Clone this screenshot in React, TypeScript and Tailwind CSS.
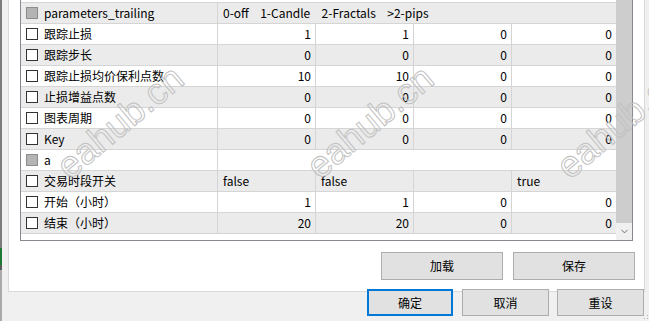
import { ChevronDown } from 'lucide-react';

type Row = {
  name: string;
  group?: boolean;
  note?: string;
  vals?: string[];
  left?: boolean;
};

const rows: Row[] = [
  { name: 'parameters_trailing', group: true, note: '0-off  1-Candle  2-Fractals  >2-pips' },
  { name: '跟踪止损', vals: ['1', '1', '0', '0'] },
  { name: '跟踪步长', vals: ['0', '0', '0', '0'] },
  { name: '跟踪止损均价保利点数', vals: ['10', '10', '0', '0'] },
  { name: '止损增益点数', vals: ['0', '0', '0', '0'] },
  { name: '图表周期', vals: ['0', '0', '0', '0'] },
  { name: 'Key', vals: ['0', '0', '0', '0'] },
  { name: 'a', group: true, note: '' },
  { name: '交易时段开关', vals: ['false', 'false', '', 'true'], left: true },
  { name: '开始（小时）', vals: ['1', '1', '0', '0'] },
  { name: '结束（小时）', vals: ['20', '20', '0', '0'] },
];

const Check = ({ group }: { group?: boolean }) => (
  <span
    className={
      group
        ? 'w-[12px] h-[12px] border border-[#8c8c8c] bg-[#b4b4b4] shrink-0'
        : 'w-[12px] h-[12px] border border-[#333333] bg-white shrink-0'
    }
  />
);

const Watermark = ({ x }: { x: number }) => (
  <span
    className="absolute top-[122px] pointer-events-none whitespace-nowrap font-['Liberation_Sans',sans-serif] text-[37px] leading-none text-transparent [-webkit-text-stroke:1px_#c2c2c2] -translate-x-1/2 -translate-y-1/2 -rotate-[40deg]"
    style={{ left: x }}
  >
    eahub.cn
  </span>
);

const Button = ({ label, primary, w }: { label: string; primary?: boolean; w: string }) => (
  <button
    className={`${w} ${
      primary ? 'border-2 border-[#0078d7]' : 'border border-[#adadad]'
    } bg-[#e1e1e1] text-[12px] text-black flex items-center justify-center`}
  >
    {label}
  </button>
);

export default function App() {
  return (
    <div className="relative w-[649px] h-[321px] overflow-hidden bg-[#f0f0f0] font-['Noto_Sans_CJK_SC',sans-serif] text-[12px] text-black flex">
      {/* left edge of the window behind */}
      <div className="w-[2px] flex flex-col">
        <div className="h-[248px] bg-[#7b7b7b]" />
        <div className="h-[17px] bg-[#1f7a36]" />
        <div className="h-[5px] bg-[#5a5a5a]" />
        <div className="flex-1 bg-[#a9a9a9]" />
      </div>

      <div className="ml-[6px] flex flex-col">
        {/* white tab panel */}
        <div className="w-[637px] bg-white border-x border-b border-[#d9d9d9] pl-[11px] pr-[9px] pb-[11px]">
          {/* parameter table */}
          <div className="w-[613px] h-[241px] border-x border-b border-[#888890] flex">
            <div className="w-[595px] flex flex-col">
              <div className="h-[3px] bg-white border-b border-[#d5d5d5]" />
              {rows.map((r, i) => (
                <div
                  key={r.name}
                  className={`grid grid-cols-[197px_98px_98px_98px_104px] h-[21px] border-b border-[#d5d5d5] leading-[20px] ${
                    i % 2 === 0 ? 'bg-[#ebebeb]' : 'bg-white'
                  }`}
                >
                  <div className="flex items-center gap-[6px] pl-[5px] border-r border-[#d5d5d5]">
                    <Check group={r.group} />
                    <span>{r.name}</span>
                  </div>
                  {r.group ? (
                    <div className="col-span-4 pl-[5px] whitespace-pre [word-spacing:3px]">{r.note}</div>
                  ) : (
                    r.vals!.map((v, j) => (
                      <div
                        key={j}
                        className={`${j < 3 ? 'border-r border-[#d5d5d5]' : ''} ${
                          r.left ? 'text-left pl-[5px]' : 'text-right pr-[4px]'
                        }`}
                      >
                        {v}
                      </div>
                    ))
                  )}
                </div>
              ))}
            </div>
            {/* scrollbar */}
            <div className="w-[16px] flex flex-col bg-[#f0f0f0]">
              <div className="flex-1 bg-[#cdcdcd]" />
              <div className="h-[17px] flex items-center justify-center text-[#606060]">
                <ChevronDown size={11} strokeWidth={2} />
              </div>
            </div>
          </div>

          <div className="mt-[11px] flex justify-end gap-[10px]">
            <Button label="加载" w="w-[122px] h-[28px]" />
            <Button label="保存" w="w-[122px] h-[28px]" />
          </div>
        </div>

        {/* dialog buttons */}
        <div className="-mt-[3px] flex justify-end gap-[9px] pr-[1px]">
          <Button label="确定" primary w="w-[86px] h-[27px]" />
          <Button label="取消" w="w-[87px] h-[27px]" />
          <Button label="重设" w="w-[87px] h-[27px] -ml-[1px]" />
        </div>
      </div>

      <Watermark x={120} />
      <Watermark x={370} />
      <Watermark x={620} />

      {/* size grip */}
      <svg className="absolute right-0 bottom-0" width="8" height="8" viewBox="0 0 8 8">
        <rect x="6" y="2" width="1" height="1" fill="#b0b0b0" />
        <rect x="3" y="5" width="1" height="1" fill="#b0b0b0" />
        <rect x="6" y="5" width="1" height="1" fill="#b0b0b0" />
      </svg>
    </div>
  );
}
